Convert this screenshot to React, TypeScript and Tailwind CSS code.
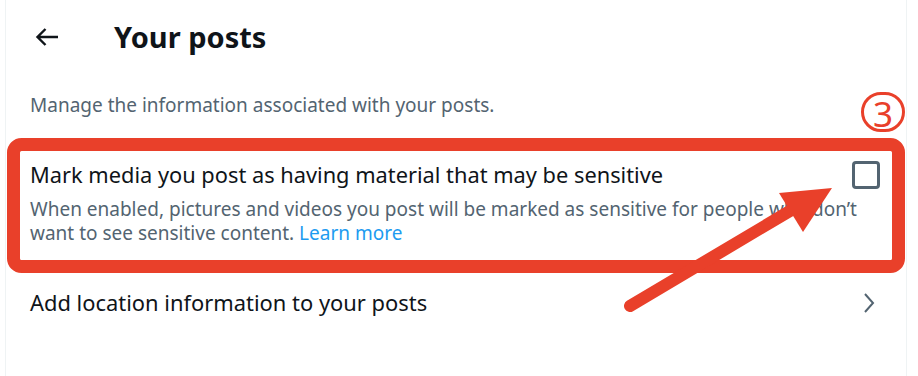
import React from "react";

export default function App() {
  const font = { fontFamily: '"Noto Sans", "Segoe UI", Arial, sans-serif' };
  return (
    <div className="relative w-[918px] h-[376px] overflow-hidden bg-white" style={font}>
      <div className="ml-[5px] w-[902px] h-full border-x border-[#eff3f4]">
        {/* header */}
        <div className="h-[73px] flex items-center">
          <div className="w-[108px] flex items-center pl-[29px]">
            <svg width="24" height="20" viewBox="0 0 24 20" fill="none">
              <path d="M23 10H2.5M10.5 2L2.5 10L10.5 18" stroke="#0f1419" strokeWidth="2.4" strokeLinejoin="miter" />
            </svg>
          </div>
          <h1 className="text-[29px] leading-[34px] font-bold text-[#0f1419]">Your posts</h1>
        </div>
        {/* subtitle */}
        <div className="pt-[19px] pl-[24px] h-[79px]">
          <p className="text-[19px] leading-[26px] text-[#536471]">Manage the information associated with your posts.</p>
        </div>
        {/* sensitive */}
        <div className="flex items-start pl-[24px] pr-[26px] pt-[9px] h-[121px]">
          <div className="flex-1 min-w-0">
            <p className="text-[21.8px] leading-[28px] text-[#0f1419] whitespace-nowrap">Mark media you post as having material that may be sensitive</p>
            <p className="mt-[8px] text-[19px] leading-[24px] text-[#536471] whitespace-nowrap">
              When enabled, pictures and videos you post will be marked as sensitive for people who don’t
              <br />
              want to see sensitive content. <span className="text-[#1d9bf0]">Learn more</span>
            </p>
          </div>
          <div className="ml-[10px] mt-[0px] w-[28px] h-[28px] rounded-[4px] border-[3px] border-[#536471] shrink-0 bg-white" />
        </div>
        {/* location */}
        <div className="flex items-center pl-[24px] pr-[30px] h-[60px]">
          <p className="flex-1 text-[21.9px] leading-[28px] text-[#0f1419]">Add location information to your posts</p>
          <svg width="14" height="22" viewBox="0 0 14 22" fill="none">
            <path d="M3 2L11 11L3 20" stroke="#536471" strokeWidth="2" />
          </svg>
        </div>
      </div>

      {/* annotations */}
      <svg className="absolute left-0 top-0 pointer-events-none" width="918" height="376" viewBox="0 0 918 376">
        <rect x="13.5" y="144.5" width="885" height="122" rx="8" fill="none" stroke="#e9402a" strokeWidth="13" />
        <line x1="630" y1="306" x2="800" y2="205" stroke="#e9402a" strokeWidth="12" strokeLinecap="round" />
        <polygon points="832,188 779,193 803,232" fill="#e9402a" />
      </svg>
      <div className="absolute left-[861px] top-[92px] w-[44px] h-[40px] rounded-full border-[3px] border-[#e9402a] flex items-center justify-center">
        <span className="text-[35px] leading-none text-[#e9402a] translate-y-[1px]" style={{ fontFamily: '"Noto Sans", sans-serif' }}>
          3
        </span>
      </div>
    </div>
  );
}
